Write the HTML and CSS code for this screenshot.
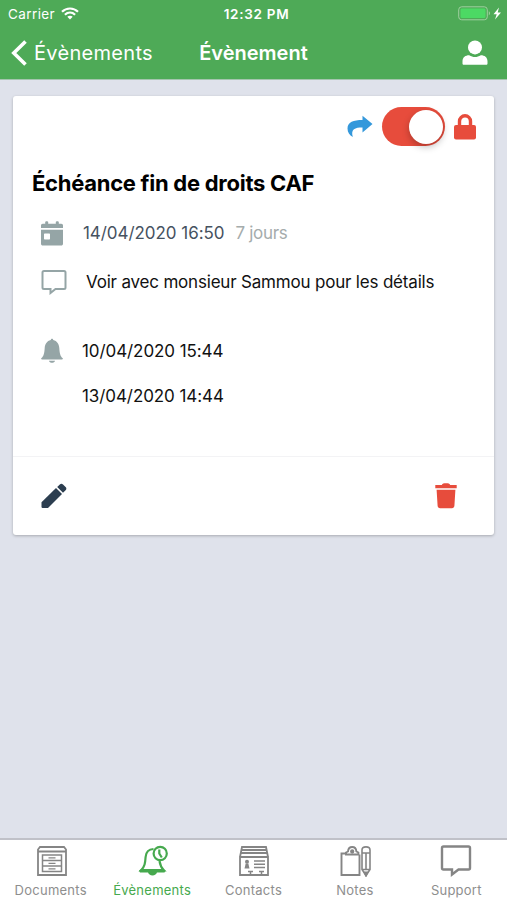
FILE: index.html
```html
<!DOCTYPE html>
<html lang="fr">
<head>
  <meta charset="UTF-8">
  <meta name="viewport" content="width=device-width, initial-scale=1.0">
  <title>Évènement</title>
  <link rel="stylesheet" href="styles.css">
</head>
<body>
  <header class="header">
    <div class="status">
      <div class="carrier">
        <span>Carrier</span>
        <svg width="18" height="13" viewBox="0 0 18 13" fill="none" stroke="#fff" stroke-width="2.2">
          <path d="M1 4.800C5.500.4 12.500.4 17 4.800M3.900 7.800c3-2.800 7.200-2.800 10.200 0"/>
          <path d="M9 12.500L6.300 9.800c1.500-1.400 3.900-1.400 5.400 0z" fill="#fff" stroke="none"/>
        </svg>
      </div>
      <span class="clock">12:32 PM</span>
      <div class="battery">
        <svg width="44" height="15" viewBox="0 0 44 15">
          <rect x="0.700" y="0.800" width="28.600" height="13" rx="3" fill="none" stroke="#9fcf9f"/>
          <rect x="2.500" y="2.500" width="25" height="9.600" rx="1.300" fill="#4cd964"/>
          <path d="M30.800 5.200c1.600.6 1.600 3.500 0 4.100z" fill="#9fcf9f"/>
          <path d="M41 1.500l-5.500 6.700h3.200l-1.700 5.300 6-7h-3.300z" fill="#fff"/>
        </svg>
      </div>
    </div>
    <nav class="nav">
      <a class="back">
        <svg width="16" height="26" viewBox="0 0 16 26" fill="none" stroke="#fff" stroke-width="3.600">
          <path d="M14.500 1.500L2.800 13l11.700 11.500"/>
        </svg>
        <span>Évènements</span>
      </a>
      <h1 class="nav-title">Évènement</h1>
      <svg class="user" width="26" height="26" viewBox="0 0 26 26" fill="#fff">
        <circle cx="13" cy="7.400" r="7"/>
        <path d="M.500 23.500v-2.300c0-4 3-6 6.600-6 2.300 1.400 3.700 1.700 5.900 1.700s3.600-.3 5.900-1.700c3.600 0 6.600 2 6.600 6v2.300c0 .8-.5 1.300-1.300 1.300H1.800c-.8 0-1.300-.5-1.300-1.300z"/>
      </svg>
    </nav>
  </header>

  <main class="content">
    <section class="card">
      <div class="card-tools">
        <svg width="26" height="23" viewBox="0 0 26 23" fill="#3498db">
          <path d="M15.500.700L25.500 9l-10 8.500v-5C8 12.500 3.500 14 5.800 22 2.500 20 .500 17.500.500 13.500.500 7 6.500 5 15.500 5z"/>
        </svg>
        <div class="switch"><span class="knob"></span></div>
        <svg width="22" height="26" viewBox="0 0 22 26">
          <rect y="11" width="22" height="14.500" rx="2" fill="#e74c3c"/>
          <path d="M5.500 12V7.300a5.500 5.500 0 0 1 11 0V12" fill="none" stroke="#e74c3c" stroke-width="3.400"/>
        </svg>
      </div>

      <h2 class="card-title">Échéance fin de droits CAF</h2>

      <div class="row row-date">
        <svg width="22" height="25" viewBox="0 0 22 25" fill="#95a5a6">
          <path d="M0 7V4.500c0-1 .7-1.700 1.700-1.700h2.500V1c0-1.100 3-1.100 3 0v1.800h7.600V1c0-1.100 3-1.100 3 0v1.800h2.500c1 0 1.700.7 1.700 1.700V7z"/>
          <path fill-rule="evenodd" d="M0 8.800h22v13.900c0 1-.7 1.800-1.800 1.800H1.800C.7 24.500 0 23.700 0 22.700zM3.700 12.500c-.4 0-.7.3-.7.700v4.600c0 .4.300.7.700.7h4.600c.4 0 .7-.3.700-.7v-4.600c0-.4-.3-.7-.7-.7z"/>
        </svg>
        <span class="date">14/04/2020 16:50</span>
        <span class="delay">7 jours</span>
      </div>

      <div class="row row-comment">
        <svg width="26" height="26" viewBox="0 0 26 26" fill="none" stroke="#95a5a6" stroke-width="2">
          <path d="M3 2h20c1 0 1.500.5 1.500 1.500v15c0 1-.5 1.500-1.500 1.500h-8.500L9.500 24v-4H3c-1 0-1.500-.5-1.500-1.500v-15C1.500 2.500 2 2 3 2z"/>
        </svg>
        <span class="comment">Voir avec monsieur Sammou pour les détails</span>
      </div>

      <div class="row row-alarm">
        <svg width="22" height="26" viewBox="0 0 22 26" fill="#95a5a6">
          <path d="M9.800 2C9.800.3 12.200.3 12.200 2c4 1 5.800 4 6.100 8 .3 5.500 1.200 8.500 3.200 10.100.7.600.3 1.400-.7 1.400H1.200c-1 0-1.400-.8-.7-1.400 2-1.600 2.900-4.600 3.200-10.100.3-4 2.100-7 6.100-8zM8 22.800h6c-.5 2.700-5.500 2.700-6 0z"/>
        </svg>
        <ul class="alarms">
          <li>10/04/2020 15:44</li>
          <li>13/04/2020 14:44</li>
        </ul>
      </div>

      <footer class="card-footer">
        <svg width="26" height="26" viewBox="0 0 26 26" fill="#2c3e50">
          <path d="M15 5l6 6L7 25H1.300L.5 24.200v-5z"/>
          <path d="M16.200 4l2.600-2.600c1-1 2.200-1 3.200 0l2.600 2.600c1 1 1 2.200 0 3.200L22 9.800z"/>
        </svg>
        <svg width="22" height="26" viewBox="0 0 22 26" fill="#e74c3c">
          <path d="M.3 2h6.500C7.700.2 8.500.2 11 .2s3.300 0 4.200 1.800h6.500v3.200H.3zM1.600 6.800h18.800l-1 16c-.1 1.500-1 2.400-2.500 2.400H5.100c-1.500 0-2.400-.9-2.500-2.400z"/>
        </svg>
      </footer>
    </section>
  </main>

  <nav class="tabs">
    <a class="tab">
      <svg width="32" height="32" viewBox="0 0 32 32" fill="none" stroke="#858585" stroke-width="1.800">
        <path d="M3 6.500h28V30H3zM3 6.500V4.500L5 2h24l2 2.500v2"/>
        <path d="M7.500 10h19v16.500h-19zM7.500 15.500h19M7.500 21h19" stroke-width="1.500"/>
        <path d="M13.500 12.800h7M13.500 18.300h7M13.500 23.800h7" stroke-width="1.200"/>
      </svg>
      <span>Documents</span>
    </a>
    <a class="tab active">
      <svg width="32" height="32" viewBox="0 0 32 32" fill="none" stroke="#46a94e" stroke-width="2.200">
        <path d="M17.500 4c-5 .2-7.500 3.200-7.900 8-.4 6-.8 9.500-4.600 13.500h23c-3-3-4-6-4.500-9.500"/>
        <path d="M3 25.500l2-1.500h22.500l2 1.500-1 2H4z" fill="#46a94e" stroke="none"/>
        <path d="M12 27h9c-.5 4.500-8.500 4.500-9 0z" fill="#46a94e" stroke="none"/>
        <circle cx="24.200" cy="8.500" r="6.600"/>
        <path d="M23.300 4.500V8.500l2.500 4"/>
      </svg>
      <span>Évènements</span>
    </a>
    <a class="tab">
      <svg width="32" height="32" viewBox="0 0 32 32" fill="none" stroke="#858585" stroke-width="1.800">
        <path d="M3 12l2-10h24l2 10M4 8h26M4.500 5h25M3 12h28v18H3z"/>
        <path d="M17 16h11M17 19.200h11M17 22.500h11M11 26.500h5M13.500 26.500v3.500M22 26.500h5M24.500 26.500v3.500" stroke-width="1.500"/>
        <circle cx="10" cy="16.800" r="2" fill="#858585" stroke="none"/>
        <path d="M7.500 23.500l1.200-5h2.600l1.200 5z" fill="#858585" stroke="none"/>
      </svg>
      <span>Contacts</span>
    </a>
    <a class="tab">
      <svg width="32" height="32" viewBox="0 0 32 32" fill="none" stroke="#858585" stroke-width="1.900">
        <path d="M7 8.500H2.500V30H20.500V9.500M7 9.500V7.500l2-1c.5-6 7.900-6 8.400 0l2 1v2z"/>
        <circle cx="13.200" cy="6.500" r="1.200" fill="#858585"/>
        <path d="M23 5c0-4.200 8-4.200 8 0v19.500l-4 6-4-6zM23 8h8M23 24.500h8M27 8v16" stroke-width="1.600"/>
        <path d="M25.500 27.500h3l-1.500 3z" fill="#858585"/>
      </svg>
      <span>Notes</span>
    </a>
    <a class="tab">
      <svg width="32" height="32" viewBox="0 0 32 32" fill="none" stroke="#858585" stroke-width="2.400">
        <path d="M3.500 1.500h25c1 0 1.500.5 1.500 1.500v20c0 1-.5 1.500-1.500 1.500H18.500l-6.500 5v-5H3.500c-1 0-1.500-.5-1.500-1.500V3c0-1 .5-1.500 1.500-1.500z"/>
      </svg>
      <span>Support</span>
    </a>
  </nav>
</body>
</html>
```

FILE: styles.css
```css
:root {
  --green: #4eaa57;
  --bg-color: #dfe2eb;
  --danger-color: #e74c3c;
  --tab-color: #8e8e8e;
}

* {
  box-sizing: border-box;
}

body {
  margin: 0;
  height: 100vh;
  display: flex;
  flex-direction: column;
  overflow: hidden;
  background: var(--bg-color);
  color: #111;
  font-family: Inter, "Liberation Sans", sans-serif;
  font-size: 17px;
}

svg {
  display: block;
  flex: none;
}

h1, h2, ul {
  margin: 0;
  padding: 0;
}

/* header */
.header {
  height: 80px;
  background: var(--green);
  border-bottom: 1px solid #a5c5ae;
  color: #fff;
}

.status {
  display: grid;
  grid-template-columns: 1fr auto 1fr;
  align-items: center;
  height: 27px;
  padding: 0 5px 0 8px;
  font-size: 13.5px;
}

.carrier {
  display: flex;
  align-items: center;
  gap: 6px;
  letter-spacing: 0.4px;
}

.clock {
  padding-left: 3px;
  font-weight: 600;
  letter-spacing: 0.7px;
}

.battery {
  justify-self: end;
}

.nav {
  display: grid;
  grid-template-columns: 1fr auto 1fr;
  align-items: center;
  height: 51px;
  padding: 0 19px 0 11px;
}

.back {
  display: flex;
  align-items: center;
  gap: 7px;
  font-size: 20px;
  letter-spacing: 0.3px;
}

.nav-title {
  padding-left: 8px;
  font-size: 20px;
  font-weight: 600;
}

.user {
  justify-self: end;
}

/* card */
.content {
  flex: 1;
  padding: 16px 13px;
}

.card {
  height: 439px;
  display: flex;
  flex-direction: column;
  background: #fff;
  border-radius: 3px;
  box-shadow: 0 1px 3px rgba(0, 0, 0, 0.25);
}

.card-tools {
  display: flex;
  justify-content: flex-end;
  align-items: center;
  gap: 9px;
  height: 61px;
  padding-right: 18px;
}

.switch {
  display: flex;
  justify-content: flex-end;
  align-items: center;
  width: 63px;
  height: 39px;
  padding: 2px;
  border-radius: 20px;
  background: var(--danger-color);
}

.knob {
  width: 34px;
  height: 34px;
  border-radius: 50%;
  background: #fff;
  box-shadow: 0 3px 7px rgba(0, 0, 0, 0.25);
}

.card-title {
  height: 53px;
  padding-left: 19px;
  line-height: 53px;
  font-size: 22px;
  font-weight: 700;
  letter-spacing: -0.27px;
  color: #000;
}

.row {
  display: flex;
  align-items: center;
  padding-left: 28px;
}

.row-date {
  height: 46px;
}

.date {
  margin-left: 20px;
  letter-spacing: -0.05px;
  color: #46525f;
}

.delay {
  margin-left: 11px;
  letter-spacing: -0.3px;
  color: #a5acac;
}

.row-comment {
  height: 52px;
}

.comment {
  margin-left: 19px;
  letter-spacing: -0.19px;
}

.row-alarm {
  align-items: flex-start;
  height: 148px;
  padding-top: 30px;
}

.alarms {
  margin-left: 19px;
  letter-spacing: -0.08px;
  list-style: none;
}

.alarms li {
  height: 45px;
  line-height: 26px;
}

.card-footer {
  display: flex;
  justify-content: space-between;
  align-items: center;
  height: 79px;
  padding: 0 37px 0 28px;
  border-top: 1px solid #f3f3f5;
}

/* bottom tabs */
.tabs {
  display: grid;
  grid-template-columns: repeat(5, 1fr);
  height: 62px;
  background: #fff;
  border-top: 2px solid #c0c1c8;
}

.tab {
  display: flex;
  flex-direction: column;
  align-items: center;
  gap: 4px;
  padding-top: 5px;
  color: var(--tab-color);
  font-size: 13px;
  line-height: 18px;
  letter-spacing: 0.25px;
}

.tab.active {
  color: #46a94e;
}
```
